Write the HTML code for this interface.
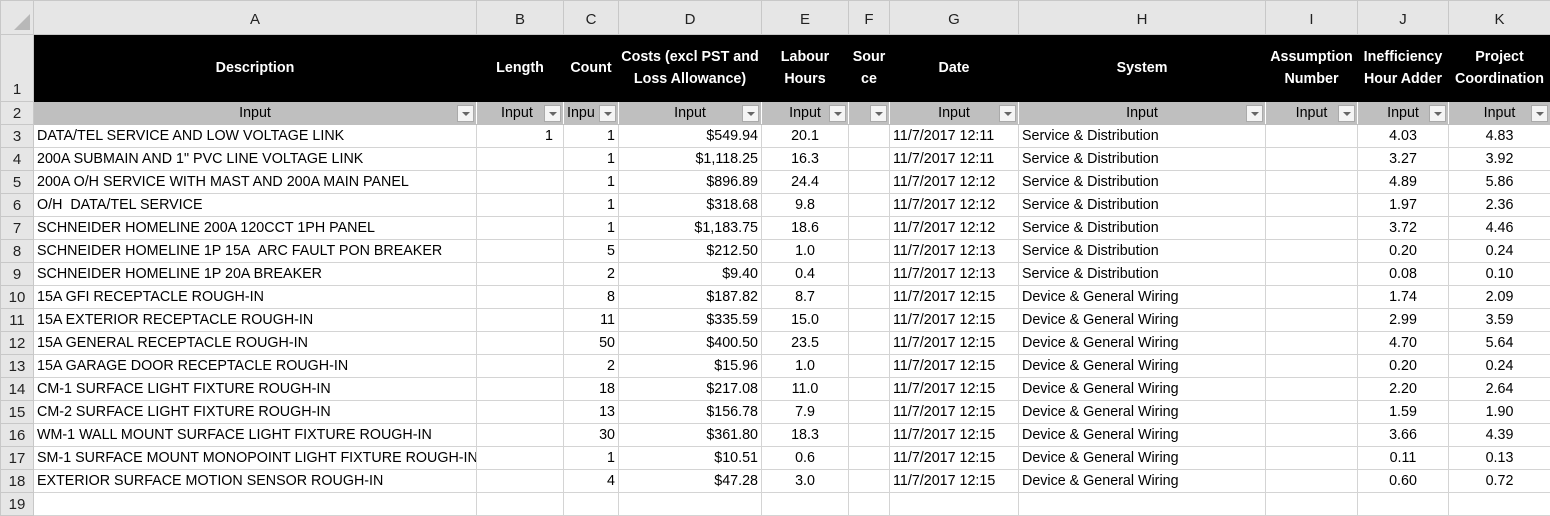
<!DOCTYPE html>
<html><head><meta charset="utf-8"><style>
*{margin:0;padding:0;box-sizing:border-box}
body{width:1550px;height:495px;overflow:hidden;background:#fff;font-family:"Liberation Sans",Arial,sans-serif;font-size:14.3px;color:#000}
table{border-collapse:collapse;table-layout:fixed;position:absolute;left:0;top:0;width:1550px}
td{border:1px solid #d4d4d4;height:23px;padding:0 3px;white-space:nowrap;overflow:hidden;line-height:21px}
tr.ch td{height:34px;background:#e6e6e6;text-align:center;font-size:15px;color:#222;border-color:#c8c8c8;vertical-align:bottom;line-height:29px}
td.rh{background:#e6e6e6;text-align:center;font-size:15px;color:#222;border-color:#c8c8c8;padding:0}
tr.h1 td{height:67px;background:#000;color:#fff;font-weight:bold;text-align:center;white-space:normal;line-height:22px;font-size:14.3px;border-color:#000;padding:0 1px}
tr.h1 td.rh{background:#e6e6e6;color:#222;font-weight:normal;vertical-align:bottom;line-height:22px;border-color:#c8c8c8;font-size:15px}
tr.h2 td{background:#bfbfbf;text-align:center;position:relative;border-color:#bfbfbf;border-right-color:#fff}
tr.h2 td.rh{background:#e6e6e6;border-color:#c8c8c8}
.dd{position:absolute;right:2px;top:3px;width:17px;height:17px;background:#f4f4f4;border:1px solid #aaa}
.dd:after{content:"";position:absolute;left:4px;top:6px;border-left:4px solid transparent;border-right:4px solid transparent;border-top:4px solid #666}
.r{text-align:right}.c{text-align:center}
.corner{position:absolute;left:14px;top:14px;width:0;height:0;border-left:16px solid transparent;border-bottom:16px solid #b8b8b8}
</style></head><body>
<table>
<colgroup><col style="width:33px"><col style="width:443px"><col style="width:87px"><col style="width:55px"><col style="width:143px"><col style="width:87px"><col style="width:41px"><col style="width:129px"><col style="width:247px"><col style="width:92px"><col style="width:91px"><col style="width:102px"></colgroup>
<tr class="ch"><td style="background:#e6e6e6"></td><td>A</td><td>B</td><td>C</td><td>D</td><td>E</td><td>F</td><td>G</td><td>H</td><td>I</td><td>J</td><td>K</td></tr>
<tr class="h1"><td class="rh">1</td><td>Description</td><td>Length</td><td>Count</td><td>Costs (excl PST and Loss Allowance)</td><td>Labour Hours</td><td>Sour ce</td><td>Date</td><td>System</td><td>Assumption Number</td><td>Inefficiency Hour Adder</td><td>Project Coordination</td></tr>
<tr class="h2"><td class="rh">2</td><td>Input<span class="dd"></span></td><td style="text-align:left;padding-left:24px">Input<span class="dd"></span></td><td style="text-align:left">Inpu<span class="dd"></span></td><td>Input<span class="dd"></span></td><td>Input<span class="dd"></span></td><td><span class="dd"></span></td><td>Input<span class="dd"></span></td><td>Input<span class="dd"></span></td><td>Input<span class="dd"></span></td><td>Input<span class="dd"></span></td><td>Input<span class="dd"></span></td></tr>
<tr><td class="rh">3</td><td>DATA/TEL SERVICE AND LOW VOLTAGE LINK</td><td class="r" style="padding-right:10px">1</td><td class="r">1</td><td class="r">$549.94</td><td class="c">20.1</td><td></td><td>11/7/2017 12:11</td><td>Service &amp; Distribution</td><td></td><td class="c">4.03</td><td class="c">4.83</td></tr>
<tr><td class="rh">4</td><td>200A SUBMAIN AND 1" PVC LINE VOLTAGE LINK</td><td></td><td class="r">1</td><td class="r">$1,118.25</td><td class="c">16.3</td><td></td><td>11/7/2017 12:11</td><td>Service &amp; Distribution</td><td></td><td class="c">3.27</td><td class="c">3.92</td></tr>
<tr><td class="rh">5</td><td>200A O/H SERVICE WITH MAST AND 200A MAIN PANEL</td><td></td><td class="r">1</td><td class="r">$896.89</td><td class="c">24.4</td><td></td><td>11/7/2017 12:12</td><td>Service &amp; Distribution</td><td></td><td class="c">4.89</td><td class="c">5.86</td></tr>
<tr><td class="rh">6</td><td>O/H&nbsp; DATA/TEL SERVICE</td><td></td><td class="r">1</td><td class="r">$318.68</td><td class="c">9.8</td><td></td><td>11/7/2017 12:12</td><td>Service &amp; Distribution</td><td></td><td class="c">1.97</td><td class="c">2.36</td></tr>
<tr><td class="rh">7</td><td>SCHNEIDER HOMELINE 200A 120CCT 1PH PANEL</td><td></td><td class="r">1</td><td class="r">$1,183.75</td><td class="c">18.6</td><td></td><td>11/7/2017 12:12</td><td>Service &amp; Distribution</td><td></td><td class="c">3.72</td><td class="c">4.46</td></tr>
<tr><td class="rh">8</td><td>SCHNEIDER HOMELINE 1P 15A&nbsp; ARC FAULT PON BREAKER</td><td></td><td class="r">5</td><td class="r">$212.50</td><td class="c">1.0</td><td></td><td>11/7/2017 12:13</td><td>Service &amp; Distribution</td><td></td><td class="c">0.20</td><td class="c">0.24</td></tr>
<tr><td class="rh">9</td><td>SCHNEIDER HOMELINE 1P 20A BREAKER</td><td></td><td class="r">2</td><td class="r">$9.40</td><td class="c">0.4</td><td></td><td>11/7/2017 12:13</td><td>Service &amp; Distribution</td><td></td><td class="c">0.08</td><td class="c">0.10</td></tr>
<tr><td class="rh">10</td><td>15A GFI RECEPTACLE ROUGH-IN</td><td></td><td class="r">8</td><td class="r">$187.82</td><td class="c">8.7</td><td></td><td>11/7/2017 12:15</td><td>Device &amp; General Wiring</td><td></td><td class="c">1.74</td><td class="c">2.09</td></tr>
<tr><td class="rh">11</td><td>15A EXTERIOR RECEPTACLE ROUGH-IN</td><td></td><td class="r">11</td><td class="r">$335.59</td><td class="c">15.0</td><td></td><td>11/7/2017 12:15</td><td>Device &amp; General Wiring</td><td></td><td class="c">2.99</td><td class="c">3.59</td></tr>
<tr><td class="rh">12</td><td>15A GENERAL RECEPTACLE ROUGH-IN</td><td></td><td class="r">50</td><td class="r">$400.50</td><td class="c">23.5</td><td></td><td>11/7/2017 12:15</td><td>Device &amp; General Wiring</td><td></td><td class="c">4.70</td><td class="c">5.64</td></tr>
<tr><td class="rh">13</td><td>15A GARAGE DOOR RECEPTACLE ROUGH-IN</td><td></td><td class="r">2</td><td class="r">$15.96</td><td class="c">1.0</td><td></td><td>11/7/2017 12:15</td><td>Device &amp; General Wiring</td><td></td><td class="c">0.20</td><td class="c">0.24</td></tr>
<tr><td class="rh">14</td><td>CM-1 SURFACE LIGHT FIXTURE ROUGH-IN</td><td></td><td class="r">18</td><td class="r">$217.08</td><td class="c">11.0</td><td></td><td>11/7/2017 12:15</td><td>Device &amp; General Wiring</td><td></td><td class="c">2.20</td><td class="c">2.64</td></tr>
<tr><td class="rh">15</td><td>CM-2 SURFACE LIGHT FIXTURE ROUGH-IN</td><td></td><td class="r">13</td><td class="r">$156.78</td><td class="c">7.9</td><td></td><td>11/7/2017 12:15</td><td>Device &amp; General Wiring</td><td></td><td class="c">1.59</td><td class="c">1.90</td></tr>
<tr><td class="rh">16</td><td>WM-1 WALL MOUNT SURFACE LIGHT FIXTURE ROUGH-IN</td><td></td><td class="r">30</td><td class="r">$361.80</td><td class="c">18.3</td><td></td><td>11/7/2017 12:15</td><td>Device &amp; General Wiring</td><td></td><td class="c">3.66</td><td class="c">4.39</td></tr>
<tr><td class="rh">17</td><td>SM-1 SURFACE MOUNT MONOPOINT LIGHT FIXTURE ROUGH-IN</td><td></td><td class="r">1</td><td class="r">$10.51</td><td class="c">0.6</td><td></td><td>11/7/2017 12:15</td><td>Device &amp; General Wiring</td><td></td><td class="c">0.11</td><td class="c">0.13</td></tr>
<tr><td class="rh">18</td><td>EXTERIOR SURFACE MOTION SENSOR ROUGH-IN</td><td></td><td class="r">4</td><td class="r">$47.28</td><td class="c">3.0</td><td></td><td>11/7/2017 12:15</td><td>Device &amp; General Wiring</td><td></td><td class="c">0.60</td><td class="c">0.72</td></tr>
<tr><td class="rh">19</td><td></td><td></td><td></td><td></td><td></td><td></td><td></td><td></td><td></td><td></td><td></td></tr>
</table>
<div class="corner"></div>
</body></html>
